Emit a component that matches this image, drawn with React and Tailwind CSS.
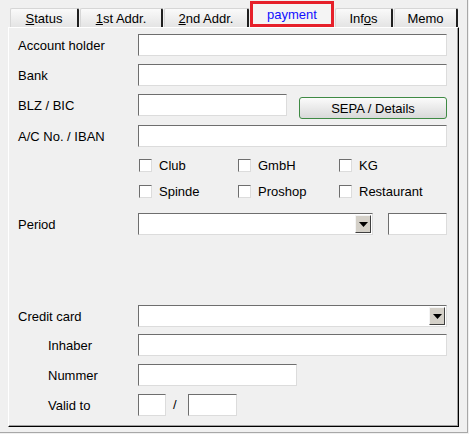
import React from 'react'

const field = 'h-[22px] bg-white border border-t-[#6e6e6e] border-l-[#6e6e6e] border-r-[#dcdcdc] border-b-[#dcdcdc]'

const TABS = [
  { w: 'w-[69px]', label: <><u>S</u>tatus</> },
  { w: 'w-[83px]', label: <><u>1</u>st Addr.</> },
  { w: 'w-[85px]', label: <><u>2</u>nd Addr.</> },
]
const TABS_RIGHT = [
  { w: 'w-[58px]', label: <>Inf<u>o</u>s</> },
  { w: 'w-[64px]', label: <>Memo</> },
]

function Tab({ w, children }) {
  return (
    <div className={`${w} h-[19px] mr-[1px] flex items-center justify-center rounded-t-[2px] border-t border-l border-[#d6d6d6] border-r-2 border-r-[#202020] bg-gradient-to-b from-[#fafafa] to-[#e4e4e4] text-[13px] text-black leading-none pt-[1px]`}>
      <span>{children}</span>
    </div>
  )
}

function Row({ label, indent, children, className = '' }) {
  return (
    <div className={`flex items-center h-[22px] ${className}`}>
      <div className={`shrink-0 text-[13px] text-black pt-[1px] ${indent ? 'w-[129px] pl-[39px]' : 'w-[129px] pl-[9px]'}`}>{label}</div>
      {children}
    </div>
  )
}

function Check({ label, w }) {
  return (
    <div className={`flex items-center ${w}`}>
      <div className="w-[13px] h-[13px] bg-white border border-t-[#6e6e6e] border-l-[#6e6e6e] border-r-[#dcdcdc] border-b-[#dcdcdc]" />
      <span className="ml-[7px] text-[13px] text-black leading-none">{label}</span>
    </div>
  )
}

function Select({ className }) {
  return (
    <div className={`${field} ${className} flex justify-end items-center pr-[1px]`}>
      <div className="w-[16px] h-[18px] bg-[#d4d0c8] border border-t-[#f4f4f4] border-l-[#f4f4f4] border-r-[#404040] border-b-[#404040] flex items-center justify-center">
        <svg width="9" height="5" viewBox="0 0 9 5"><path d="M0 0h9L4.5 5z" fill="#000" /></svg>
      </div>
    </div>
  )
}

export default function App() {
  return (
    <div className="w-[469px] h-[434px] bg-[#f0f0f0] font-['Liberation_Sans',Arial,sans-serif] overflow-hidden">
      <div className="w-[468px] h-[433px] border-r border-b border-[#a8a8a8]">
        {/* tab strip */}
        <div className="flex items-end h-[27px] pl-[10px]">
          {TABS.map((t, i) => <Tab key={i} w={t.w}>{t.label}</Tab>)}
          <div className="w-[84px] h-[26px] mr-[1px] border-[3px] border-[#e6202a] bg-[#f4f4f4] flex items-center justify-center">
            <span className="text-[13px] text-[#1010ff] leading-none">payment</span>
          </div>
          {TABS_RIGHT.map((t, i) => <Tab key={i} w={t.w}>{t.label}</Tab>)}
        </div>

        {/* panel */}
        <div className="ml-[8px] w-[451px] h-[400px] border-t border-l border-white border-r border-b border-r-black border-b-black shadow-[inset_-1px_-1px_0_#a0a0a0]">
          <div className="pr-[11px] pt-[6px]">
            <Row label="Account holder"><div className={`${field} flex-1`} /></Row>
            <Row label="Bank" className="mt-[8px]"><div className={`${field} flex-1`} /></Row>
            <Row label="BLZ / BIC" className="mt-[8px]">
              <div className="flex items-start flex-1 h-[22px]">
                <div className={`${field} w-[149px]`} />
                <button className="ml-[12px] mt-[3px] flex-1 h-[22px] rounded-[3px] border border-[#3f8a44] bg-gradient-to-b from-[#fbfbfb] to-[#d9d9d9] text-[13px] text-black leading-none">
                  SEPA / Details
                </button>
              </div>
            </Row>
            <Row label="A/C No. / IBAN" className="mt-[9px]"><div className={`${field} flex-1`} /></Row>

            <div className="flex ml-[130px] mt-[12px] h-[13px]">
              <Check label="Club" w="w-[99px]" />
              <Check label="GmbH" w="w-[101px]" />
              <Check label="KG" w="w-[100px]" />
            </div>
            <div className="flex ml-[130px] mt-[13px] h-[13px]">
              <Check label="Spinde" w="w-[99px]" />
              <Check label="Proshop" w="w-[101px]" />
              <Check label="Restaurant" w="w-[100px]" />
            </div>

            <Row label="Period" className="mt-[15px]">
              <Select className="w-[235px]" />
              <div className={`${field} ml-[15px] flex-1`} />
            </Row>

            <Row label="Credit card" className="mt-[70px]">
              <Select className="flex-1" />
            </Row>
            <Row label="Inhaber" indent className="mt-[7px]"><div className={`${field} flex-1`} /></Row>
            <Row label="Nummer" indent className="mt-[8px]"><div className={`${field} w-[159px]`} /></Row>
            <Row label="Valid to" indent className="mt-[8px]">
              <div className={`${field} w-[28px]`} />
              <span className="ml-[7px] w-[15px] text-[13px] text-black">/</span>
              <div className={`${field} w-[49px]`} />
            </Row>
          </div>
        </div>
      </div>
    </div>
  )
}
